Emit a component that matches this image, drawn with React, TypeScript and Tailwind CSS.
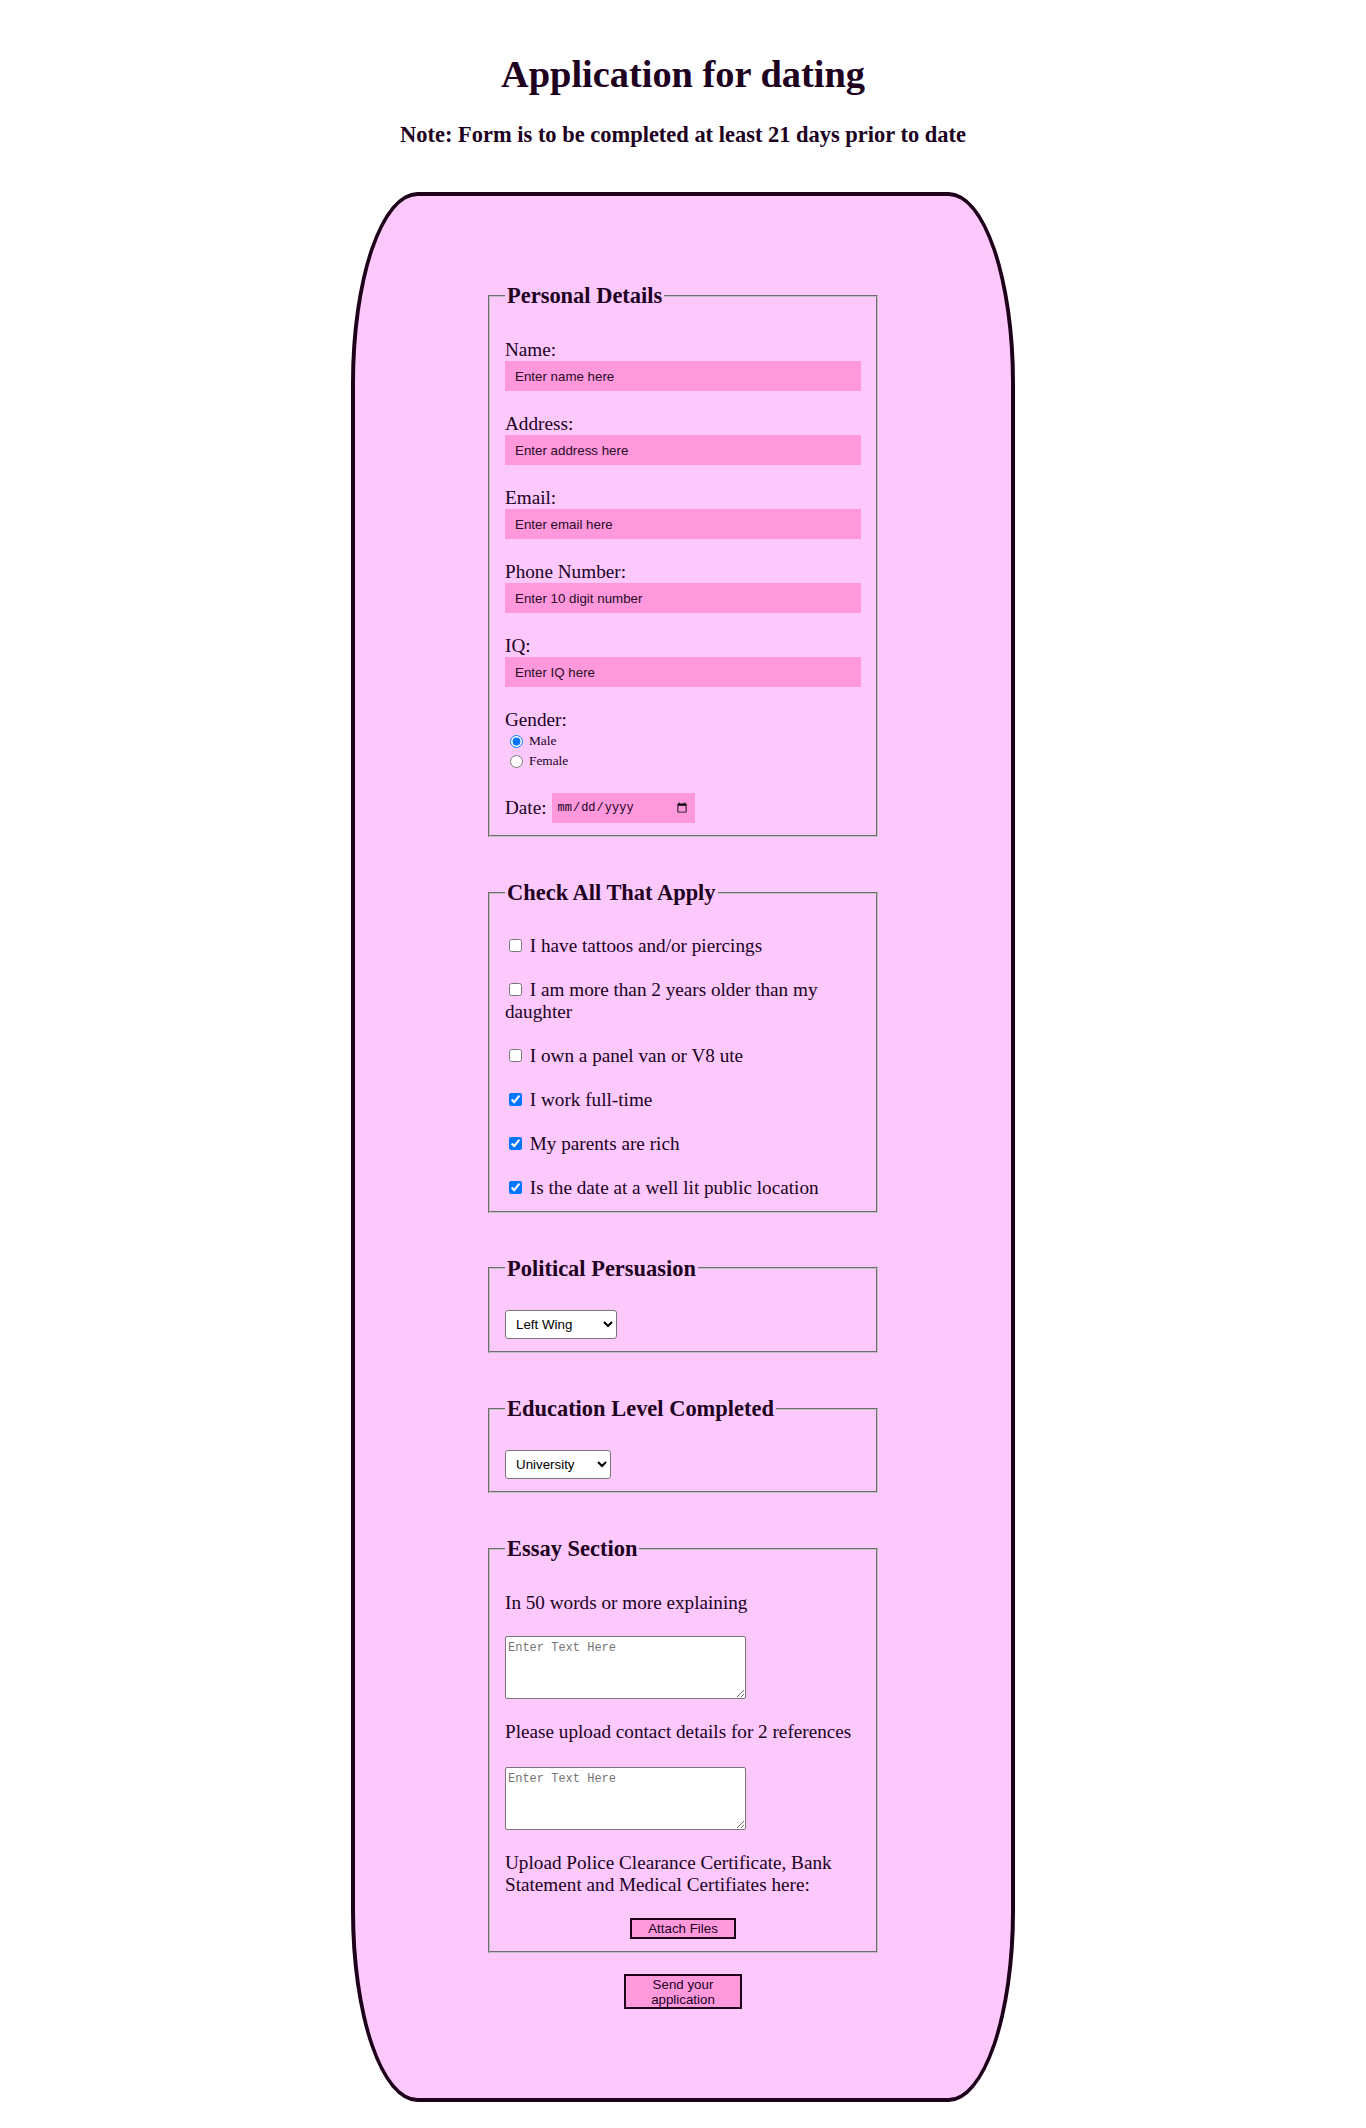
import React from "react";

const serif = "font-['Liberation_Serif','Times_New_Roman',serif]";
const sans = "font-['Liberation_Sans',Arial,sans-serif]";

const fieldsetCls =
  "mx-auto w-[390px] border-2 [border-style:groove] border-[#c0c0c0] px-[15px] pb-[12px]";
const legendCls = "px-[2px] text-[22.46px] font-bold leading-[25.3px]";

const textInputCls = `block w-full h-[30px] bg-[#ff99dc] pl-[10px] text-[13.33px] ${sans} text-[#20001f] placeholder:text-[#2a0a26] outline-none`;

const Field: React.FC<{ label: string; placeholder: string }> = ({
  label,
  placeholder,
}) => (
  <div>
    <label className="block leading-[22px]">{label}</label>
    <input type="text" placeholder={placeholder} className={textInputCls} />
  </div>
);

const checks = [
  { text: "I have tattoos and/or piercings", checked: false },
  { text: "I am more than 2 years older than my daughter", checked: false },
  { text: "I own a panel van or V8 ute", checked: false },
  { text: "I work full-time", checked: true },
  { text: "My parents are rich", checked: true },
  { text: "Is the date at a well lit public location", checked: true },
];

export default function App() {
  return (
    <div className={`min-h-[2128px] bg-white text-[#20001f] ${serif} text-[19.2px] pt-[52px]`}>
      <h1 className="text-center text-[38.4px] font-bold leading-[44px]">
        Application for dating
      </h1>
      <p className="mt-[26px] text-center text-[22.46px] font-bold leading-[26px]">
        Note: Form is to be completed at least 21 days prior to date
      </p>

      <div className="mx-auto mt-[44px] w-[664px] rounded-[10%] border-4 border-[#1e001b] bg-[#fdc9fd] pt-[87px] pb-[89px]">
        <form className="flex flex-col gap-[43px]" onSubmit={(e) => e.preventDefault()}>
          {/* personal */}
          <fieldset className={`${fieldsetCls} pt-[31px]`}>
            <legend className={legendCls}>Personal Details</legend>
            <div className="flex flex-col gap-[22px]">
              <Field label="Name:" placeholder="Enter name here" />
              <Field label="Address:" placeholder="Enter address here" />
              <Field label="Email:" placeholder="Enter email here" />
              <Field label="Phone Number:" placeholder="Enter 10 digit number" />
              <Field label="IQ:" placeholder="Enter IQ here" />
              <div>
                <div className="leading-[22px]">Gender:</div>
                <label className="flex h-[20px] items-center text-[13.33px]">
                  <input
                    type="radio"
                    name="gender"
                    defaultChecked
                    className="ml-[5px] mr-[6px] h-[13px] w-[13px]"
                  />
                  Male
                </label>
                <label className="flex h-[20px] items-center text-[13.33px]">
                  <input
                    type="radio"
                    name="gender"
                    className="ml-[5px] mr-[6px] h-[13px] w-[13px]"
                  />
                  Female
                </label>
              </div>
              <div className="flex h-[30px] items-center">
                <label className="mr-[5px] leading-[22px]">Date:</label>
                <input
                  type="date"
                  className="h-[30px] w-[143px] bg-[#ff99dc] px-[5px] font-['Liberation_Mono',monospace] text-[12px] text-[#20001f]"
                />
              </div>
            </div>
          </fieldset>

          {/* checkboxes */}
          <fieldset className={`${fieldsetCls} pt-[29px]`}>
            <legend className={legendCls}>Check All That Apply</legend>
            <div className="flex flex-col gap-[22px]">
              {checks.map((c) => (
                <p key={c.text} className="leading-[22px]">
                  <input
                    type="checkbox"
                    defaultChecked={c.checked}
                    className="ml-[4px] mr-[3px] h-[13px] w-[13px]"
                  />{" "}
                  {c.text}
                </p>
              ))}
            </div>
          </fieldset>

          <fieldset className={`${fieldsetCls} pt-[29px]`}>
            <legend className={legendCls}>Political Persuasion</legend>
            <select
              defaultValue="left"
              className={`block h-[29px] w-[112px] rounded-[3px] border border-[#767676] bg-white pl-[6px] text-[13.33px] ${sans} text-black`}
            >
              <option value="left">Left Wing</option>
              <option value="right">Right Wing</option>
              <option value="centre">Centre</option>
            </select>
          </fieldset>

          <fieldset className={`${fieldsetCls} pt-[29px]`}>
            <legend className={legendCls}>Education Level Completed</legend>
            <select
              defaultValue="uni"
              className={`block h-[29px] w-[106px] rounded-[3px] border border-[#767676] bg-white pl-[6px] text-[13.33px] ${sans} text-black`}
            >
              <option value="high">High School</option>
              <option value="tafe">TAFE</option>
              <option value="uni">University</option>
            </select>
          </fieldset>

          <div className="flex flex-col items-center gap-[21px]">
            <fieldset className={`${fieldsetCls} pt-[31px]`}>
              <legend className={legendCls}>Essay Section</legend>
              <p className="leading-[22px]">In 50 words or more explaining</p>
              <textarea
                placeholder="Enter Text Here"
                className="mt-[22px] block h-[63px] w-[241px] rounded-[2px] border border-[#767676] bg-white p-[2px] font-['Liberation_Mono',monospace] text-[12px] text-black placeholder:text-[#757575]"
              />
              <p className="mt-[22px] leading-[22px]">
                Please upload contact details for 2 references
              </p>
              <textarea
                placeholder="Enter Text Here"
                className="mt-[24px] block h-[63px] w-[241px] rounded-[2px] border border-[#767676] bg-white p-[2px] font-['Liberation_Mono',monospace] text-[12px] text-black placeholder:text-[#757575]"
              />
              <p className="mt-[22px] leading-[22px]">
                Upload Police Clearance Certificate, Bank Statement and Medical
                Certifiates here:
              </p>
              <div className="mt-[22px] flex justify-center">
                <button
                  type="button"
                  className={`h-[21px] w-[106px] border-2 border-[#1e001b] bg-[#ff99dc] text-[13.33px] leading-[15px] ${sans}`}
                >
                  Attach Files
                </button>
              </div>
            </fieldset>

            <button
              type="submit"
              className={`h-[35px] w-[118px] border-2 border-[#1e001b] bg-[#ff99dc] px-[6px] text-[13.33px] leading-[15px] ${sans}`}
            >
              Send your application
            </button>
          </div>
        </form>
      </div>
    </div>
  );
}
